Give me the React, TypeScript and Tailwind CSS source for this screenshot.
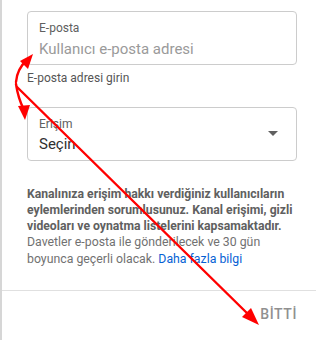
import React from "react";

export default function App() {
  return (
    <div className="relative w-[316px] h-[340px] bg-white overflow-hidden" style={{ fontFamily: "Roboto, 'Noto Sans', Arial, sans-serif" }}>
      <div className="flex h-full">
        <div className="w-[2px] h-full bg-[#d6d6d6]" />
        <div className="flex-1 flex flex-col bg-white rounded-bl-[4px] pl-[25px] pr-[19px] pt-[11px]">
          {/* Email field */}
          <div className="h-[54px] border border-[#cccccc] rounded-[4px] pl-[11px] pt-[8px]">
            <div className="text-[12px] leading-[16px] text-[#606060]">E-posta</div>
            <div className="mt-[3px] text-[15px] leading-[20px] text-[#9a9a9a]">Kullanıcı e-posta adresi</div>
          </div>
          <div className="mt-[5px] text-[12px] leading-[16px] text-[#555555]">E-posta adresi girin</div>

          {/* Select field */}
          <div className="mt-[21px] h-[54px] border border-[#cccccc] rounded-[4px] pl-[11px] pr-[18px] flex items-center">
            <div className="flex-1 pt-[1px]">
              <div className="text-[12px] leading-[16px] text-[#606060]">Erişim</div>
              <div className="mt-[2px] text-[15px] leading-[20px] text-[#303030]">Seçin</div>
            </div>
            <svg width="10" height="5" viewBox="0 0 10 5" className="mb-[2px]">
              <path d="M0 0 L10 0 L5 5 Z" fill="#606060" />
            </svg>
          </div>

          {/* Info text */}
          <div className="mt-[25px] text-[12px] leading-[16px]">
            <div className="font-bold text-[12.2px] text-[#606060]">
              Kanalınıza erişim hakkı verdiğiniz kullanıcıların eylemlerinden sorumlusunuz. Kanal erişimi, gizli videoları ve oynatma listelerini kapsamaktadır.
            </div>
            <div className="text-[12.3px] leading-[16.5px] text-[#717171]">
              Davetler e-posta ile gönderilecek ve 30 gün boyunca geçerli olacak.{" "}
              <span className="text-[#065fd4]">Daha fazla bilgi</span>
            </div>
          </div>

          <div className="flex-1" />
        </div>
      </div>

      {/* Footer divider and button */}
      <div className="absolute left-[2px] right-0 top-[290px] border-t border-[#e0e0e0]">
        <div className="flex justify-end pr-[19px] pt-[15px]">
          <span className="text-[14px] leading-[16px] font-medium tracking-[0.6px] text-[#909090]">BİTTİ</span>
        </div>
      </div>

      {/* Red annotation arrows */}
      <svg className="absolute inset-0 pointer-events-none" width="316" height="340" viewBox="0 0 316 340">
        <g stroke="#ff0000" strokeWidth="2.4" fill="none" strokeLinecap="round">
          <path d="M16 82 Q17 69 27 60" />
          <path d="M16 84 Q18 98 24 110" />
          <path d="M17 87 L252 318" />
        </g>
        <g fill="#ff0000">
          <path d="M33 54 L20 61 L28 69 Z" />
          <path d="M25 120 L18 106 L30 105 Z" />
          <path d="M259 325 L242 317 L251 308 Z" />
        </g>
      </svg>
    </div>
  );
}
